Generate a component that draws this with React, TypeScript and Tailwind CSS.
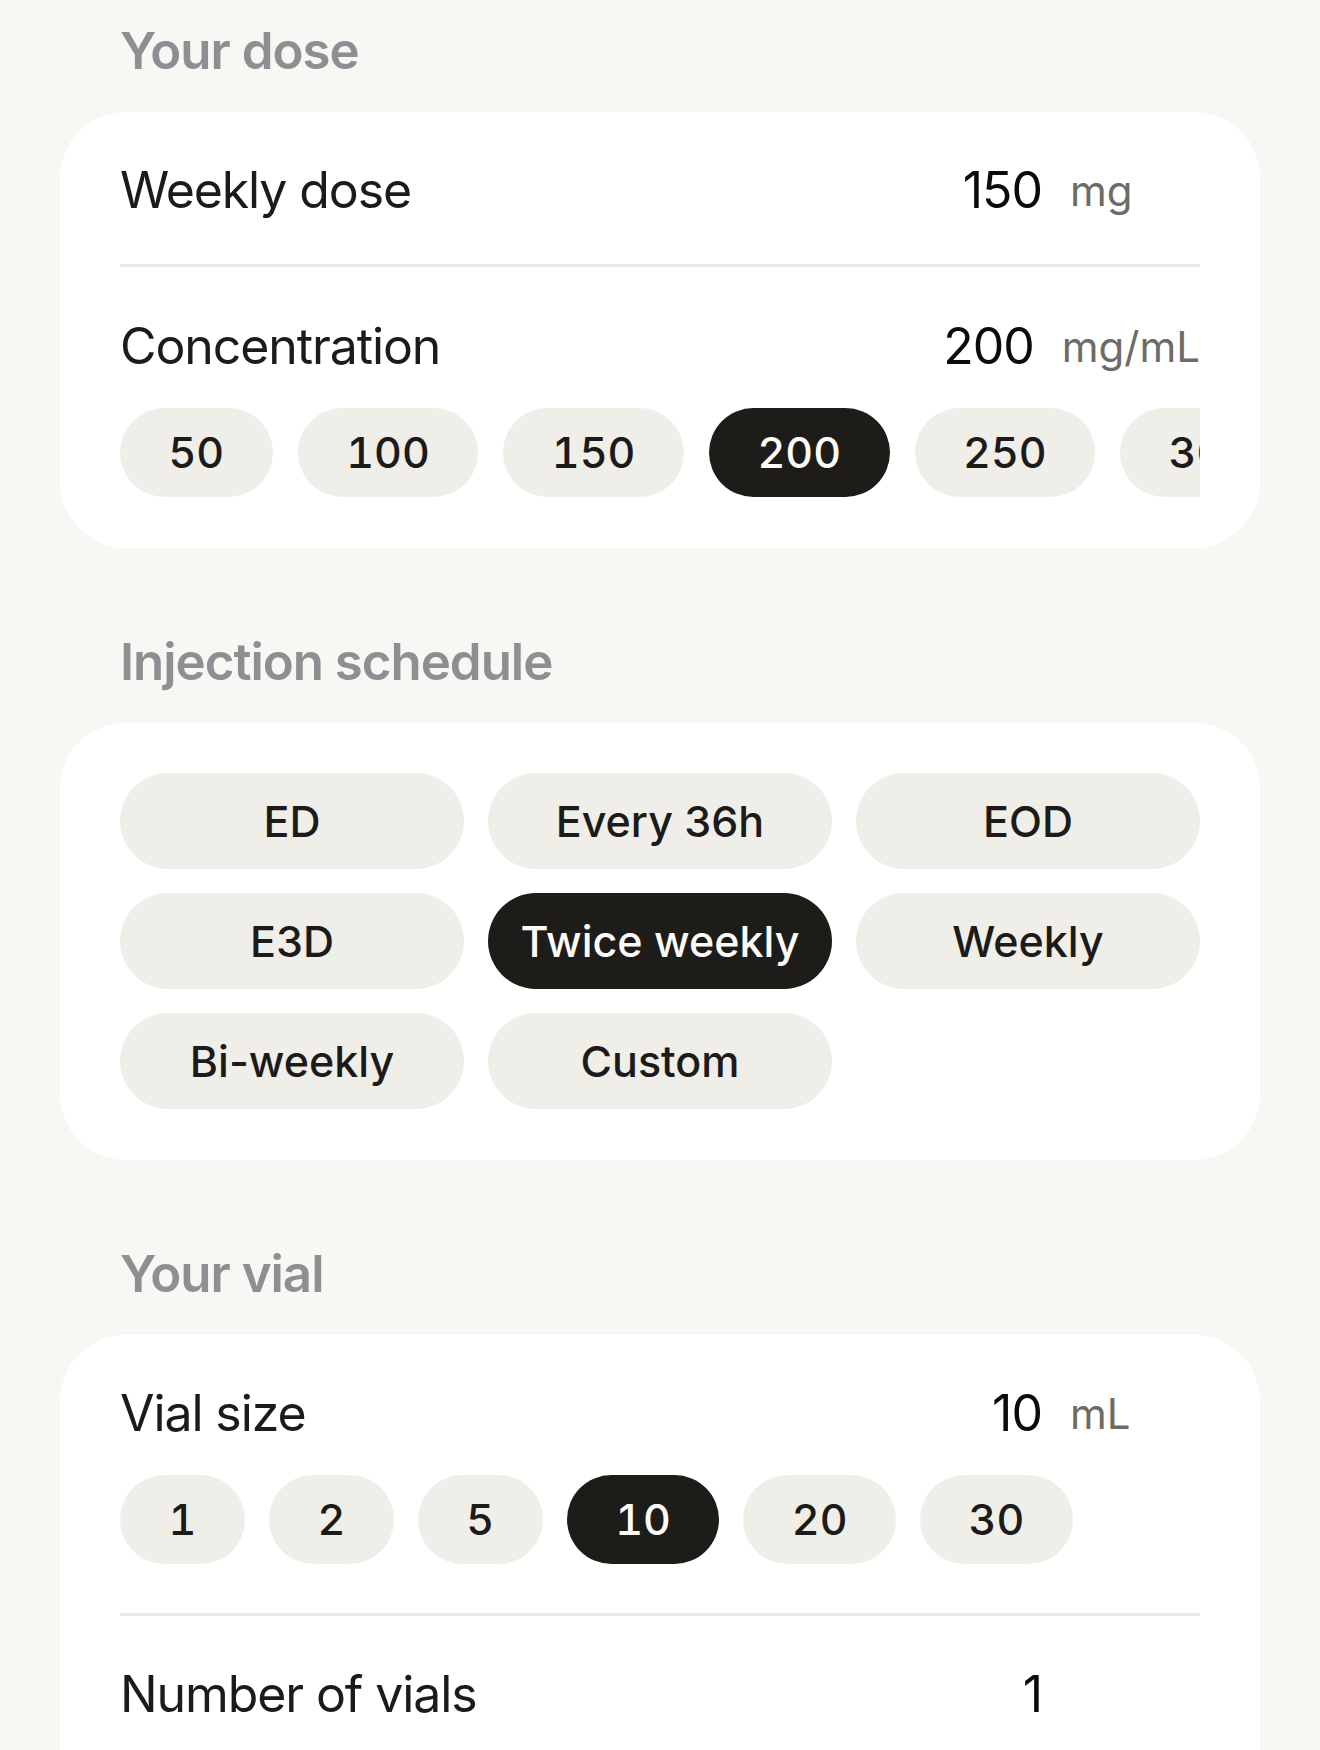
import React, { useState } from 'react';

const concentrations = [50, 100, 150, 200, 250, 300, 400];
const vialSizes = [1, 2, 5, 10, 20, 30];
const schedules = ['ED', 'Every 36h', 'EOD', 'E3D', 'Twice weekly', 'Weekly', 'Bi-weekly', 'Custom'];

const SectionTitle: React.FC<{ title: string; className?: string }> = ({ title, className = '' }) => (
  <h2 className={`h-[56px] pl-[60px] text-[51px] leading-[56px] font-semibold text-[#8e8e93] tracking-[-0.02em] ${className}`}>
    {title}
  </h2>
);

const ValueRow: React.FC<{ label: string; value: string; unit?: string; className?: string }> = ({ label, value, unit, className = '' }) => (
  <div className={`flex items-baseline h-[56px] ${className}`}>
    <span className="flex-1 text-[50px] leading-[56px] text-[#1c1b19] tracking-[-0.022em]">{label}</span>
    <span className="text-[50px] leading-[56px] text-[#0b0b0a] tracking-[-0.02em]">{value}</span>
    <span className="ml-[28px] min-w-[130px] -translate-y-[2px] text-[42px] leading-[56px] text-[#6e6b64]">{unit ?? ''}</span>
  </div>
);

const Chip: React.FC<{ label: string | number; active?: boolean; onClick?: () => void }> = ({ label, active, onClick }) => (
  <button
    onClick={onClick}
    className={`shrink-0 h-[89px] px-[48.5px] rounded-full text-[43px] font-medium tabular-nums leading-none ${
      active ? 'bg-[#1d1c18] text-[#fbfaf6]' : 'bg-[#f0eee8] text-[#1c1b19]'
    }`}
  >
    {label}
  </button>
);

const Divider: React.FC<{ className?: string }> = ({ className = '' }) => (
  <div className={`h-[3px] bg-[#ebebeb] ${className}`} />
);

export default function App() {
  const [conc, setConc] = useState(200);
  const [vial, setVial] = useState(10);
  const [schedule, setSchedule] = useState('Twice weekly');

  return (
    <div className="h-[1750px] overflow-hidden bg-[#f8f7f3] px-[60px] pt-[23px] font-['Inter','Noto_Sans',sans-serif]">
      {/* Your dose */}
      <SectionTitle title="Your dose" />
      <section className="mt-[33px] bg-white rounded-[66px] px-[60px] pt-[50px] pb-[51px]">
        <ValueRow label="Weekly dose" value="150" unit="mg" />
        <Divider className="mt-[46px]" />
        <ValueRow label="Concentration" value={String(conc)} unit="mg/mL" className="mt-[51px]" />
        <div className="mt-[34px] flex gap-[25px] overflow-hidden">
          {concentrations.map(c => (
            <Chip key={c} label={c} active={c === conc} onClick={() => setConc(c)} />
          ))}
        </div>
      </section>

      {/* Injection schedule */}
      <SectionTitle title="Injection schedule" className="mt-[86px]" />
      <section className="mt-[33px] bg-white rounded-[66px] px-[60px] pt-[50px] pb-[51px]">
        <div className="grid grid-cols-3 gap-[24px]">
          {schedules.map(s => (
            <button
              key={s}
              onClick={() => setSchedule(s)}
              className={`h-[96px] rounded-full text-[43px] font-medium leading-none ${
                s === schedule ? 'bg-[#1d1c18] text-[#fbfaf6]' : 'bg-[#f0eee8] text-[#1c1b19]'
              }`}
            >
              {s}
            </button>
          ))}
        </div>
      </section>

      {/* Your vial */}
      <SectionTitle title="Your vial" className="mt-[86px]" />
      <section className="mt-[33px] bg-white rounded-[66px] px-[60px] pt-[50px] pb-[60px]">
        <ValueRow label="Vial size" value={String(vial)} unit="mL" />
        <div className="mt-[34px] flex gap-[24px] overflow-hidden">
          {vialSizes.map(v => (
            <Chip key={v} label={v} active={v === vial} onClick={() => setVial(v)} />
          ))}
        </div>
        <Divider className="mt-[49px]" />
        <ValueRow label="Number of vials" value="1" className="mt-[50px]" />
        <div className="h-[120px]" />
      </section>
    </div>
  );
}
